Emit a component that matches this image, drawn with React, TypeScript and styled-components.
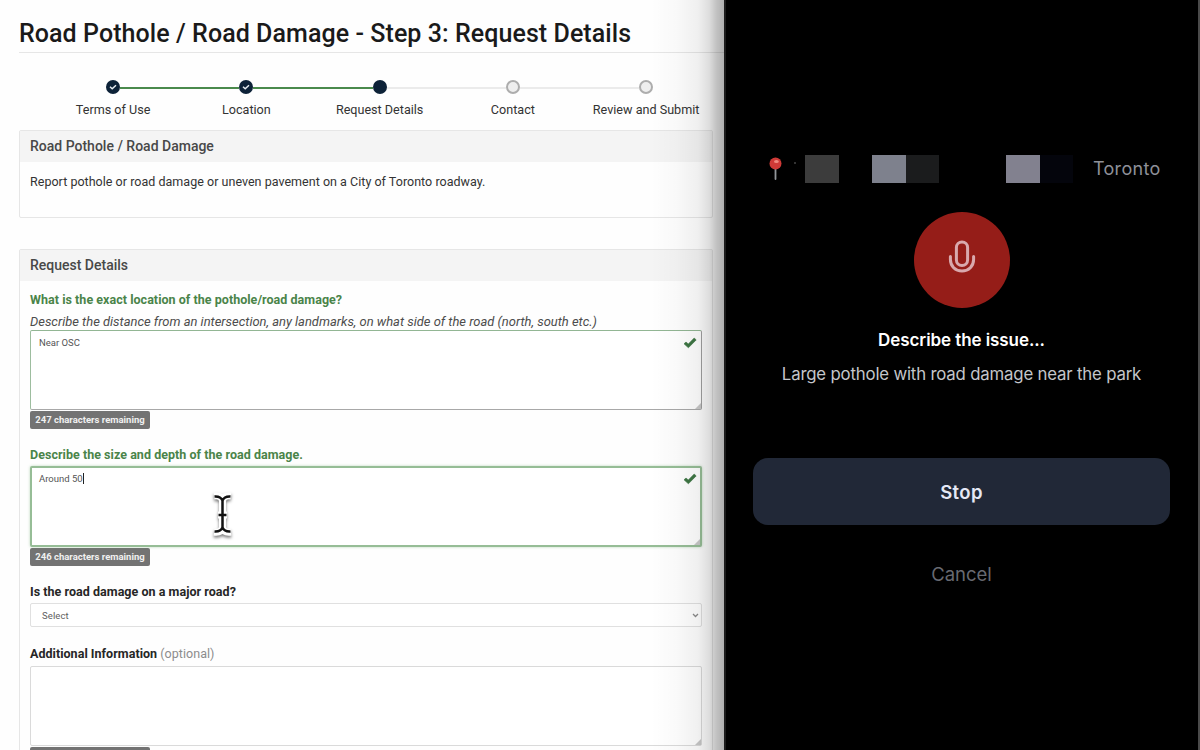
import React from "react";
import styled, { createGlobalStyle } from "styled-components";

const GlobalStyle = createGlobalStyle`
  *, *::before, *::after { box-sizing: border-box; }
  html, body { margin: 0; padding: 0; overflow: hidden; background: #fff; }
  button { border: 0; padding: 0; background: none; }
`;

const Screen = styled.div`
  display: flex;
  width: 1200px;
  height: 750px;
  overflow: hidden;
  background: #fff;
`;

const FormPane = styled.main`
  position: relative;
  width: 724px;
  height: 750px;
  padding: 13px 0 0 19px;
  overflow: hidden;
  background: #fefefe;
  color: #333;
  font-family: Roboto, "Liberation Sans", sans-serif;
`;

const EdgeShade = styled.div`
  position: absolute;
  top: 0;
  right: 0;
  width: 74px;
  height: 100%;
  pointer-events: none;
  background: linear-gradient(
    to right,
    rgba(0, 0, 0, 0) 0%,
    rgba(0, 0, 0, 0.02) 35%,
    rgba(0, 0, 0, 0.06) 65%,
    rgba(0, 0, 0, 0.13) 80%,
    rgba(0, 0, 0, 0.24) 90%,
    rgba(0, 0, 0, 0.31) 100%
  );
`;

const Title = styled.h1`
  height: 40px;
  margin: 0;
  border-bottom: 1px solid #e6e6e6;
  color: #1a1a1a;
  font-size: 25px;
  font-weight: 500;
  line-height: 41px;
  letter-spacing: 0.07px;
  white-space: nowrap;
`;

const Steps = styled.ol`
  display: flex;
  margin: 27px 0 0 27.5px;
  padding: 0;
  list-style: none;
`;

const Step = styled.li`
  display: flex;
  flex-direction: column;
  align-items: center;
  width: 133.25px;
  height: 50px;
`;

const Track = styled.div`
  display: flex;
  align-items: center;
  width: 100%;
  height: 14px;
`;

const Segment = styled.span<{ $tone: "done" | "todo" | "none" }>`
  flex: 1;
  height: 2px;
  margin-top: 1px;
  background: ${(p) => (p.$tone === "done" ? "#4a8a4c" : p.$tone === "todo" ? "#ebebeb" : "transparent")};
`;

const Dot = styled.span<{ $filled: boolean }>`
  display: flex;
  align-items: center;
  justify-content: center;
  width: 14px;
  height: 14px;
  border: ${(p) => (p.$filled ? "0" : "2px solid #adadad")};
  border-radius: 50%;
  background: ${(p) => (p.$filled ? "#0d2238" : "#eeeeee")};
`;

const StepLabel = styled.span`
  margin-top: 8px;
  font-size: 12.6px;
  line-height: 16px;
  white-space: nowrap;
`;

const Panel = styled.section<{ $top: number; $height: number }>`
  width: 694px;
  height: ${(p) => p.$height}px;
  margin-top: ${(p) => p.$top}px;
  border: 1px solid #e6e6e6;
  border-radius: 2px;
`;

const PanelHeader = styled.h2`
  height: 31px;
  margin: 0;
  padding: 0 10px;
  background: #f4f4f4;
  color: #484848;
  font-size: 14px;
  font-weight: 500;
  line-height: 31px;
`;

const PanelText = styled.p`
  margin: 10px 10px 0;
  font-size: 12.5px;
  line-height: 20px;
  letter-spacing: 0.025px;
  white-space: nowrap;
`;

const Fields = styled.div`
  display: flex;
  flex-direction: column;
  width: 692px;
  padding: 9px 10px 0;
`;

const Label = styled.label<{ $valid?: boolean }>`
  height: 20px;
  color: ${(p) => (p.$valid ? "#4a8449" : "#262626")};
  font-size: 12.5px;
  font-weight: 700;
  line-height: 20px;
  letter-spacing: 0.035px;
  white-space: nowrap;
`;

const Optional = styled.span`
  color: #8c8c8c;
  font-weight: 400;
`;

const Hint = styled.em`
  height: 20px;
  color: #4c4c4c;
  font-size: 12.95px;
  line-height: 23px;
  white-space: nowrap;
`;

const boxBorder = {
  valid: "border: 1px solid; border-color: #92b694 #a0a0a0 #a8a8a8 #9dbd9f; padding: 6px 4px 0 8px;",
  focus: "border: 2px solid #96bd96; padding: 5px 3px 0 7px; box-shadow: 0 0 3px rgba(90, 160, 90, 0.4);",
  plain: "border: 1px solid #dadada;",
};

const TextBox = styled.div<{ $kind: "valid" | "focus" | "plain" }>`
  display: flex;
  align-items: flex-start;
  justify-content: space-between;
  position: relative;
  width: 672px;
  height: ${(p) => (p.$kind === "focus" ? 81 : 80)}px;
  border-radius: 2px;
  background: #fff;
  color: #555;
  font-size: 9.5px;
  line-height: 12px;
  ${(p) => boxBorder[p.$kind]}
`;

const Caret = styled.span`
  display: inline-block;
  width: 1px;
  height: 11px;
  background: #222;
  vertical-align: -2px;
`;

const Grip = styled.svg`
  position: absolute;
  right: 0;
  bottom: 0;
`;

const Counter = styled.span`
  flex: none;
  width: 120px;
  height: 18px;
  margin-top: 1px;
  border-radius: 2px;
  background: #737373;
  color: #f0f0f0;
  font-size: 9.5px;
  font-weight: 700;
  line-height: 18px;
  text-align: center;
  white-space: nowrap;
`;

const Gap = styled.div<{ $size: number }>`
  flex: none;
  height: ${(p) => p.$size}px;
`;

const SelectBox = styled.div`
  display: flex;
  align-items: center;
  justify-content: space-between;
  width: 672px;
  height: 24px;
  padding: 1px 2px 0 11px;
  border: 1px solid #e0e0e0;
  border-radius: 2px;
  background: #fff;
  color: #606060;
  font-size: 9.5px;
  letter-spacing: 0.1px;
`;

const Pointer = styled.svg`
  position: absolute;
  left: 208px;
  top: 491px;
  filter: drop-shadow(0 2px 1.5px rgba(0, 0, 0, 0.5));
`;

const Phone = styled.aside`
  display: flex;
  flex-direction: column;
  align-items: center;
  width: 476px;
  height: 750px;
  padding: 155px 1px 0 0;
  border-left: 2px solid #1c1c1c;
  border-right: 2px solid #4a4a4a;
  background: #000;
  font-family: Inter, "Liberation Sans", sans-serif;
`;

const Place = styled.div`
  display: flex;
  align-items: center;
  align-self: stretch;
  height: 28px;
  padding-left: 43px;
`;

const Speck = styled.span`
  width: 2px;
  height: 2px;
  margin: -12px 9px 0 12px;
  background: #333;
`;

const Mosaic = styled.span`
  display: flex;
  width: 268px;
  height: 28px;
`;

const Tile = styled.span<{ $color: string; $wide?: number }>`
  width: ${(p) => p.$wide ?? 33.5}px;
  height: 28px;
  background: ${(p) => p.$color};
`;

const City = styled.span`
  margin-left: 20px;
  color: #8e9099;
  font-size: 18px;
  line-height: 30px;
  letter-spacing: 0.3px;
`;

const MicButton = styled.button`
  display: flex;
  align-items: center;
  justify-content: center;
  width: 96px;
  height: 96px;
  margin-top: 29px;
  padding-bottom: 6px;
  border-radius: 50%;
  background: #951d18;
`;

const Prompt = styled.h2`
  margin: 20px 0 0;
  color: #fff;
  font-size: 17px;
  font-weight: 600;
  line-height: 24px;
  letter-spacing: -0.08px;
`;

const Transcript = styled.p`
  margin: 10px 0 0;
  color: #c4c6ca;
  font-size: 16.8px;
  line-height: 24px;
  letter-spacing: -0.18px;
  white-space: nowrap;
`;

const StopButton = styled.button`
  width: 417px;
  height: 67px;
  margin-top: 72px;
  padding-top: 1px;
  border-radius: 15px;
  background: #212837;
  color: #e5e8f5;
  font: 600 18.5px/66px Inter, "Liberation Sans", sans-serif;
  letter-spacing: 0.35px;
`;

const CancelButton = styled.button`
  margin-top: 37px;
  color: #686a72;
  font: 400 18.5px/24px Inter, "Liberation Sans", sans-serif;
`;

const Check = () => (
  <svg width="14" height="12" viewBox="0 0 14 12">
    <path d="M1 6.8 3 5 5.3 7 11.2 1 13.2 2.9 5.4 10.8Z" fill="#3d7543" stroke="#3d7543" strokeWidth=".6" strokeLinejoin="round" />
  </svg>
);

const StepCheck = () => (
  <svg width="10" height="10" viewBox="0 0 10 10" fill="none" stroke="#e8edf2" strokeWidth="1.5">
    <path d="M2 4.8 4.2 6.7 8 3.3" />
  </svg>
);

const ResizeGrip = () => (
  <Grip width="6" height="6" viewBox="0 0 7 7">
    <path d="M7 0V7H0Z" fill="#c8c8c8" />
  </Grip>
);

const Pin = () => (
  <svg width="13" height="24" viewBox="0 0 13 24">
    <path d="M6.5 11V22" stroke="#92969a" strokeWidth="1.8" strokeLinecap="round" />
    <circle cx="6.5" cy="6.5" r="6" fill="#cf3a37" />
    <ellipse cx="7.4" cy="4.5" rx="2.4" ry="1.6" fill="#f08b80" />
  </svg>
);

const Mic = () => (
  <svg width="28" height="34" viewBox="0 0 28 34" fill="none" stroke="#d9a9ad" strokeWidth="3" strokeLinecap="round">
    <rect x="8.4" y="2" width="11.2" height="23.6" rx="5.6" />
    <path d="M2.4 16.5V19.6C2.4 26 7.2 31 14 31S25.6 26 25.6 19.6V16.5" />
  </svg>
);

const steps = [
  { name: "Terms of Use", left: "none", right: "done", check: true, filled: true },
  { name: "Location", left: "done", right: "done", check: true, filled: true },
  { name: "Request Details", left: "done", right: "todo", check: false, filled: true },
  { name: "Contact", left: "todo", right: "todo", check: false, filled: false },
  { name: "Review and Submit", left: "todo", right: "none", check: false, filled: false },
] as const;

export default function App() {
  return (
    <Screen>
      <GlobalStyle />
      <FormPane>
        <Title>Road Pothole / Road Damage - Step 3: Request Details</Title>
        <Steps>
          {steps.map((s) => (
            <Step key={s.name}>
              <Track>
                <Segment $tone={s.left} />
                <Dot $filled={s.filled}>{s.check && <StepCheck />}</Dot>
                <Segment $tone={s.right} />
              </Track>
              <StepLabel>{s.name}</StepLabel>
            </Step>
          ))}
        </Steps>

        <Panel $top={0} $height={88}>
          <PanelHeader>Road Pothole / Road Damage</PanelHeader>
          <PanelText>Report pothole or road damage or uneven pavement on a City of Toronto roadway.</PanelText>
        </Panel>

        <Panel $top={31} $height={540}>
          <PanelHeader>Request Details</PanelHeader>
          <Fields>
            <Label $valid>What is the exact location of the pothole/road damage?</Label>
            <Hint>Describe the distance from an intersection, any landmarks, on what side of the road (north, south etc.)</Hint>
            <TextBox $kind="valid">
              <span>Near OSC</span>
              <Check />
              <ResizeGrip />
            </TextBox>
            <Counter>247 characters remaining</Counter>
            <Gap $size={16} />
            <Label $valid>Describe the size and depth of the road damage.</Label>
            <Gap $size={1} />
            <TextBox $kind="focus">
              <span>Around 50<Caret /></span>
              <Check />
              <ResizeGrip />
            </TextBox>
            <Counter>246 characters remaining</Counter>
            <Gap $size={16} />
            <Label>Is the road damage on a major road?</Label>
            <Gap $size={1} />
            <SelectBox>
              Select
              <svg width="7" height="5" viewBox="0 0 7 5" fill="none" stroke="#8a8a8a" strokeWidth="1.3">
                <path d="M1 1 3.5 3.5 6 1" />
              </svg>
            </SelectBox>
            <Gap $size={17} />
            <Label>Additional Information <Optional>(optional)</Optional></Label>
            <Gap $size={2} />
            <TextBox $kind="plain">
              <ResizeGrip />
            </TextBox>
            <Counter />
          </Fields>
        </Panel>

        <EdgeShade />
        <Pointer width="30" height="48" viewBox="0 0 30 48" fill="none" strokeLinejoin="round">
          <path d="M6 5Q13 4 14.5 9Q16 4 23 5M14.5 9V37M6 41Q13 42 14.5 37Q16 42 23 41M10 24H19" stroke="#fff" strokeWidth="7" />
          <path d="M6.500 5.500Q12.500 5 14.500 9.500Q16.500 5 22.500 5.500M14.500 9V37M6.500 40.500Q12.500 41 14.500 36.500Q16.500 41 22.500 40.500M10.500 24H18.500" stroke="#111" strokeWidth="2.5" />
        </Pointer>
      </FormPane>

      <Phone>
        <Place>
          <Pin />
          <Speck />
          <Mosaic>
            <Tile $color="#3c3c3c" />
            <Tile $color="#000" />
            <Tile $color="#7e818d" />
            <Tile $color="#1b1c1d" />
            <Tile $color="#000" $wide={67} />
            <Tile $color="#82818f" />
            <Tile $color="#04050c" />
          </Mosaic>
          <City>Toronto</City>
        </Place>
        <MicButton aria-label="Record">
          <Mic />
        </MicButton>
        <Prompt>Describe the issue...</Prompt>
        <Transcript>Large pothole with road damage near the park</Transcript>
        <StopButton>Stop</StopButton>
        <CancelButton>Cancel</CancelButton>
      </Phone>
    </Screen>
  );
}
